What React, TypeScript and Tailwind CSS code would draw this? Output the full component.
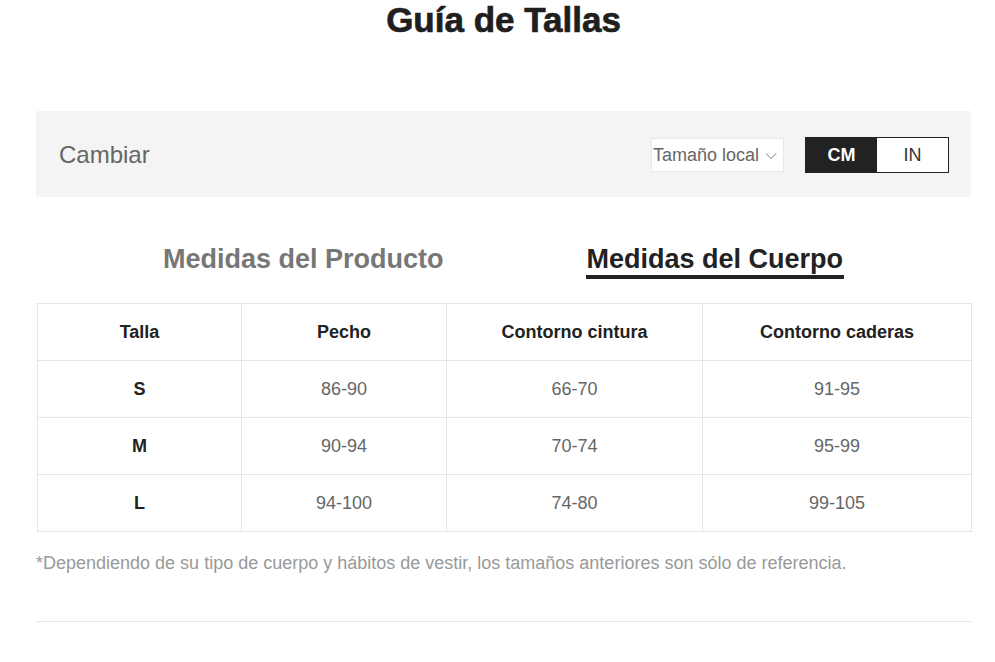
import React from "react"

const rows = [
  { size: "S", chest: "86-90", waist: "66-70", hips: "91-95" },
  { size: "M", chest: "90-94", waist: "70-74", hips: "95-99" },
  { size: "L", chest: "94-100", waist: "74-80", hips: "99-105" },
]

const cell = "border border-[#e5e5e5] h-[57px] text-center text-[18px] p-0"

const App = () => {
  return (
    <div className="w-[995px] bg-white font-['Liberation_Sans',Arial,sans-serif]">
      <div className="ml-[36px] w-[935px]">
        <h1 className="text-center text-[35px] leading-[40px] font-bold text-[#1f1f1f] [-webkit-text-stroke:0.7px_#1f1f1f]">
          Guía de Tallas
        </h1>

        <div className="mt-[71px] h-[86px] bg-[#f4f4f4] flex items-center justify-between pl-[23px] pr-[22px]">
          <span className="text-[24px] text-[#666] mt-[2px]">Cambiar</span>
          <div className="flex items-center gap-[21px] mt-[2px]">
            <div className="h-[34px] w-[133px] bg-white border border-[#e8e8e8] flex items-center pl-[1px] gap-[6px]">
              <span className="text-[18px] text-[#666] whitespace-nowrap">Tamaño local</span>
              <svg width="12" height="8" viewBox="0 0 12 8" className="mt-[2px]">
                <polyline points="1,1.5 6,6.5 11,1.5" fill="none" stroke="#777" strokeWidth="1" />
              </svg>
            </div>
            <div className="flex h-[36px] border border-[#222]">
              <button className="w-[71px] bg-[#222] text-white text-[18px] font-bold">CM</button>
              <button className="w-[71px] bg-white text-[#333] text-[18px]">IN</button>
            </div>
          </div>
        </div>

        <div className="mt-[47px] flex justify-center gap-[142px]">
          <span className="text-[27px] leading-[31px] font-bold text-[#777] border-b-4 border-transparent">
            Medidas del Producto
          </span>
          <span className="text-[27px] leading-[31px] font-bold text-[#222] border-b-4 border-[#222] px-px">
            Medidas del Cuerpo
          </span>
        </div>

        <table className="mt-[24px] ml-px w-[934px] border-collapse table-fixed">
          <colgroup>
            <col className="w-[204px]" />
            <col className="w-[205px]" />
            <col className="w-[256px]" />
            <col className="w-[269px]" />
          </colgroup>
          <thead>
            <tr>
              <th className={`${cell} font-bold text-[#222]`}>Talla</th>
              <th className={`${cell} font-bold text-[#222]`}>Pecho</th>
              <th className={`${cell} font-bold text-[#222]`}>Contorno cintura</th>
              <th className={`${cell} font-bold text-[#222]`}>Contorno caderas</th>
            </tr>
          </thead>
          <tbody>
            {rows.map((r) => (
              <tr key={r.size}>
                <td className={`${cell} font-bold text-[#222]`}>{r.size}</td>
                <td className={`${cell} text-[#666]`}>{r.chest}</td>
                <td className={`${cell} text-[#666]`}>{r.waist}</td>
                <td className={`${cell} text-[#666]`}>{r.hips}</td>
              </tr>
            ))}
          </tbody>
        </table>

        <p className="mt-[19px] text-[18px] leading-[24px] text-[#999]">
          *Dependiendo de su tipo de cuerpo y hábitos de vestir, los tamaños anteriores son sólo de referencia.
        </p>

        <div className="mt-[46px] border-t border-[#e5e5e5]" />
      </div>
    </div>
  )
}

export default App
